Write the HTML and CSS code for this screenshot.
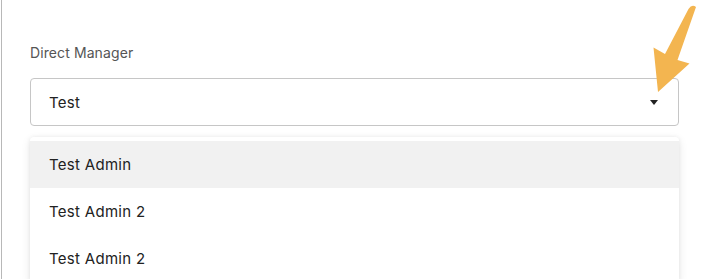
FILE: index.html
```html
<!DOCTYPE html>
<html>
<head>
<meta charset="utf-8">
<link rel="stylesheet" href="styles.css">
</head>
<body>
<div class="page">
  <div class="field">
    <div class="label">Direct Manager</div>
    <div class="select">
      <span class="value">Test</span>
      <span class="caret"></span>
    </div>
    <ul class="menu">
      <li class="item active">Test Admin</li>
      <li class="item">Test Admin 2</li>
      <li class="item">Test Admin 2</li>
    </ul>
  </div>
  <svg class="pointer" width="705" height="279" viewBox="0 0 705 279">
    <path d="M688.5 9 Q692 3.5 696 7 L677.5 60 L689.5 63.5 L658 92 L653.5 47.5 L665 54 Z" fill="#F3B550"/>
  </svg>
</div>
</body>
</html>
```

FILE: styles.css
```css
html, body {
  margin: 0;
  padding: 0;
  background: #fff;
  height: 100%;
  overflow: hidden;
}
body {
  padding-left: 1px;
  box-sizing: border-box;
}
.page {
  position: relative;
  height: 100%;
  border-left: 1px solid #b8b8b8;
  font-family: Inter, "Noto Sans", sans-serif;
}
.field {
  padding: 44px 26px 0 28px;
}
.label {
  font-size: 14px;
  line-height: 17px;
  letter-spacing: 0.1px;
  color: #555;
  margin-bottom: 17px;
}
.select {
  height: 48px;
  box-sizing: border-box;
  border: 1px solid #c6c6c6;
  border-radius: 4px;
  display: flex;
  align-items: center;
  justify-content: space-between;
  padding: 0 20px 0 18px;
}
.value {
  font-size: 15px;
  letter-spacing: 0.3px;
  color: #222;
}
.caret {
  width: 0;
  height: 0;
  border-left: 4px solid transparent;
  border-right: 4px solid transparent;
  border-top: 5px solid #222;
  margin-top: 1px;
}
.menu {
  list-style: none;
  margin: 11px 0 0 0;
  padding: 4px 0 0 0;
  border-radius: 4px;
  background: #fff;
  box-shadow: 0 3px 10px rgba(0, 0, 0, 0.10), 0 0 4px rgba(0, 0, 0, 0.06);
}
.item {
  height: 47px;
  display: flex;
  align-items: center;
  padding-left: 19px;
  font-size: 15px;
  letter-spacing: 0.3px;
  color: #222;
}
.item.active {
  background: #f1f1f1;
}
.pointer {
  position: absolute;
  left: -2px;
  top: 0;
  pointer-events: none;
}
```
